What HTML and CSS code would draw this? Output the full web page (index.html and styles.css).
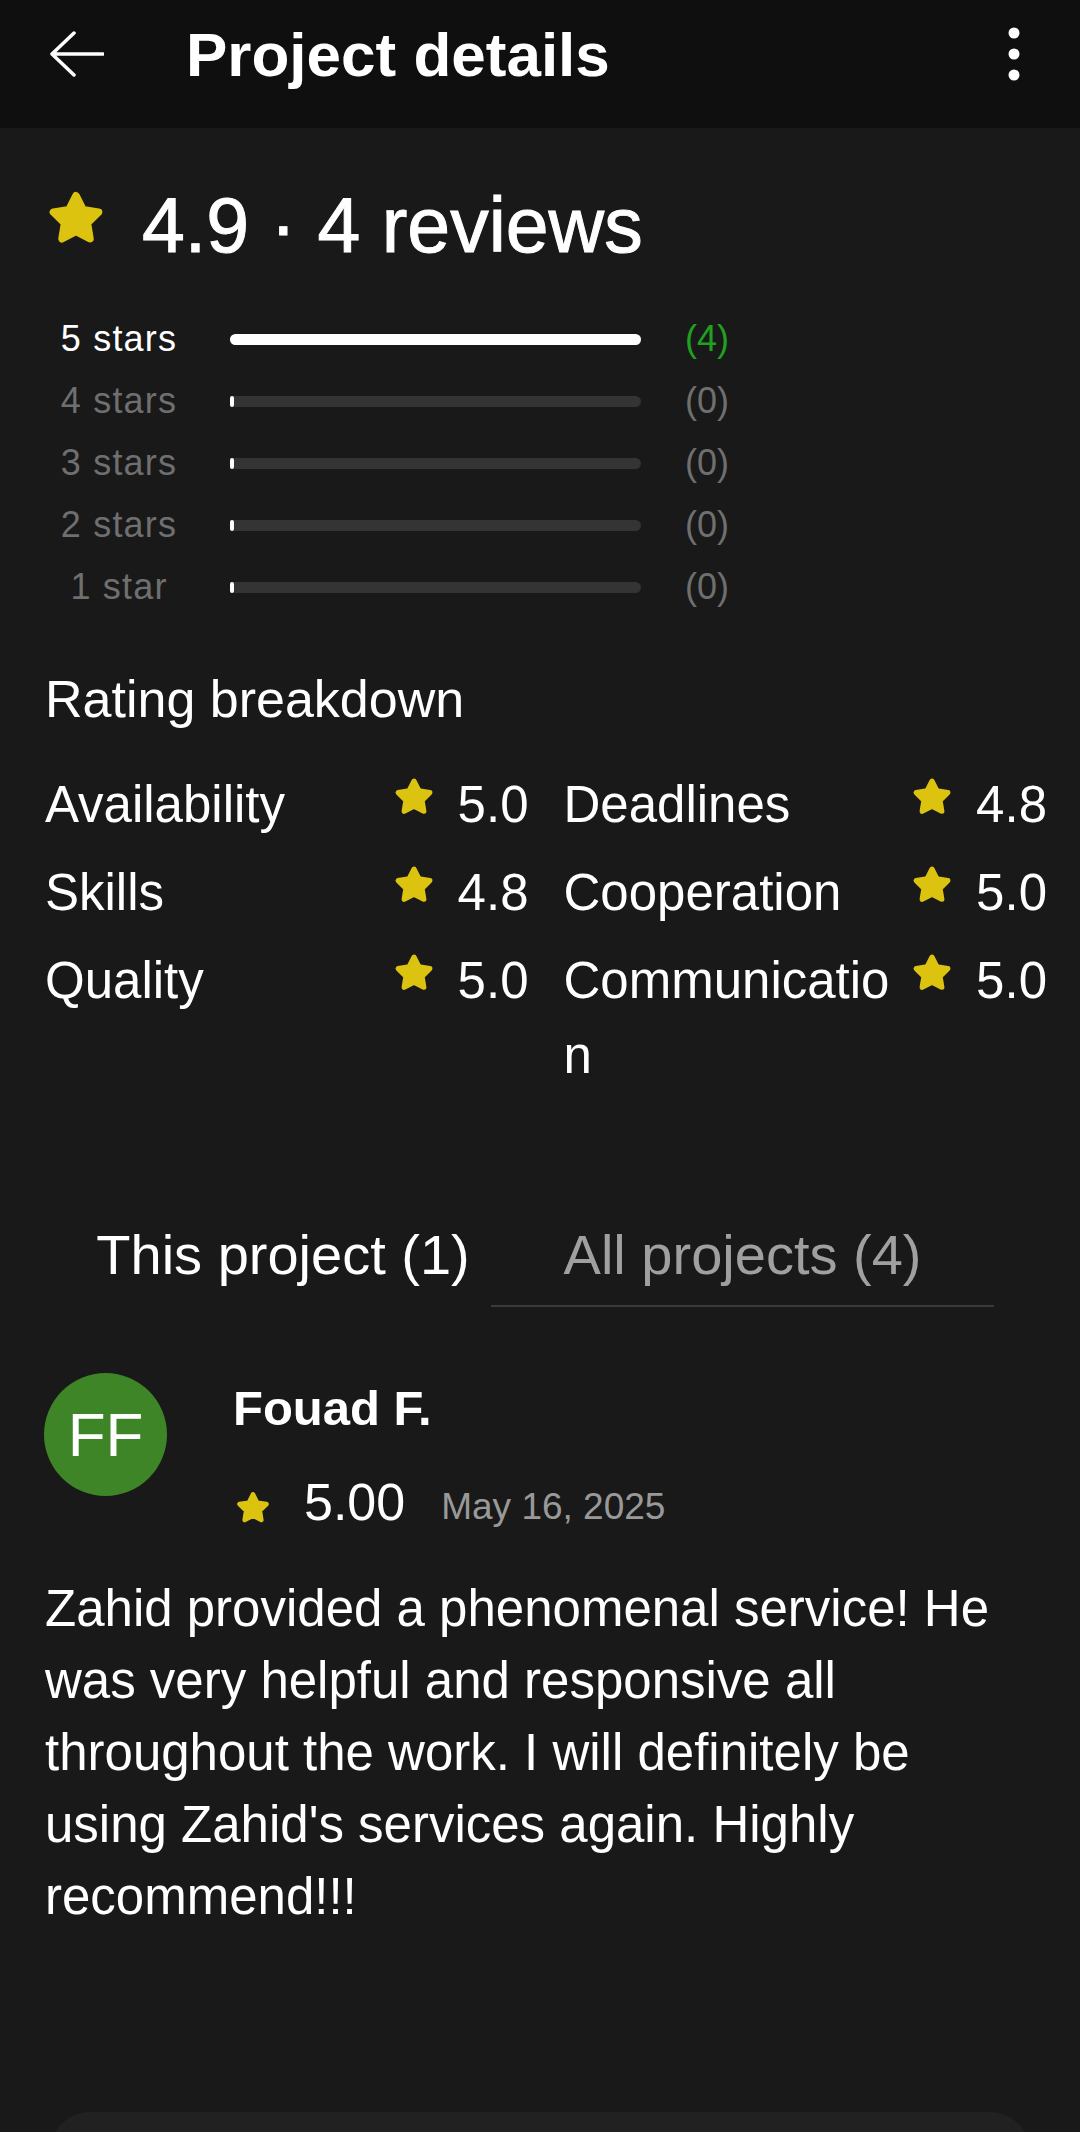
FILE: index.html
```html
<!DOCTYPE html>
<html>
<head>
    <link rel="stylesheet" href="styles.css">
</head>
<body>
    <div class="topbar">
        <svg class="back" width="55" height="46" viewBox="0 0 55 46">
            <path d="M54 23 H3 M25 2 L3 23 L25 44" fill="none" stroke="#fff" stroke-width="3.5" stroke-linecap="round" stroke-linejoin="round"/>
        </svg>
        <div class="title">Project details</div>
        <svg class="menu" width="12" height="54" viewBox="0 0 12 54">
            <circle cx="6" cy="6" r="5.5" fill="#fff"/>
            <circle cx="6" cy="27" r="5.5" fill="#fff"/>
            <circle cx="6" cy="48" r="5.5" fill="#fff"/>
        </svg>
    </div>

    <div class="main">
        <div class="summary">
            <svg class="star star-big" viewBox="0 0 24 24"><use href="#star"/></svg>
            <div class="summary-text">4.9 · 4 reviews</div>
        </div>

        <div class="dist">
            <div class="dist-row active">
                <div class="dist-label">5 stars</div>
                <div class="track"><div class="fill" style="width: 100%"></div></div>
                <div class="dist-count">(4)</div>
            </div>
            <div class="dist-row">
                <div class="dist-label">4 stars</div>
                <div class="track"><div class="fill" style="width: 0%"></div></div>
                <div class="dist-count">(0)</div>
            </div>
            <div class="dist-row">
                <div class="dist-label">3 stars</div>
                <div class="track"><div class="fill" style="width: 0%"></div></div>
                <div class="dist-count">(0)</div>
            </div>
            <div class="dist-row">
                <div class="dist-label">2 stars</div>
                <div class="track"><div class="fill" style="width: 0%"></div></div>
                <div class="dist-count">(0)</div>
            </div>
            <div class="dist-row">
                <div class="dist-label">1 star</div>
                <div class="track"><div class="fill" style="width: 0%"></div></div>
                <div class="dist-count">(0)</div>
            </div>
        </div>

        <div class="section-title">Rating breakdown</div>

        <div class="breakdown">
            <div class="metric">
                <div class="metric-label">Availability</div>
                <svg class="star star-small" viewBox="0 0 24 24"><use href="#star"/></svg>
                <div class="metric-value">5.0</div>
            </div>
            <div class="metric">
                <div class="metric-label">Deadlines</div>
                <svg class="star star-small" viewBox="0 0 24 24"><use href="#star"/></svg>
                <div class="metric-value">4.8</div>
            </div>
            <div class="metric">
                <div class="metric-label">Skills</div>
                <svg class="star star-small" viewBox="0 0 24 24"><use href="#star"/></svg>
                <div class="metric-value">4.8</div>
            </div>
            <div class="metric">
                <div class="metric-label">Cooperation</div>
                <svg class="star star-small" viewBox="0 0 24 24"><use href="#star"/></svg>
                <div class="metric-value">5.0</div>
            </div>
            <div class="metric">
                <div class="metric-label">Quality</div>
                <svg class="star star-small" viewBox="0 0 24 24"><use href="#star"/></svg>
                <div class="metric-value">5.0</div>
            </div>
            <div class="metric">
                <div class="metric-label">Communication</div>
                <svg class="star star-small" viewBox="0 0 24 24"><use href="#star"/></svg>
                <div class="metric-value">5.0</div>
            </div>
        </div>

        <div class="tabs">
            <div class="tab tab-current">This project (1)</div>
            <div class="tab tab-other">All projects (4)</div>
        </div>

        <div class="review">
            <div class="review-head">
                <div class="avatar">FF</div>
                <div class="review-meta">
                    <div class="reviewer">Fouad F.</div>
                    <div class="review-rating">
                        <svg class="star star-tiny" viewBox="0 0 24 24"><use href="#star"/></svg>
                        <span class="review-score">5.00</span>
                        <span class="review-date">May 16, 2025</span>
                    </div>
                </div>
            </div>
            <p class="review-text">Zahid provided a phenomenal service! He was very helpful and responsive all throughout the work. I will definitely be using Zahid's services again. Highly recommend!!!</p>
        </div>
    </div>

    <div class="sheet"></div>

    <svg width="0" height="0" class="defs">
        <defs>
            <polygon id="star" points="12,3.5 14.82,9.12 21.03,10.06 16.57,14.48 17.59,20.69 12,17.8 6.41,20.69 7.43,14.48 2.97,10.06 9.18,9.12" fill="#dcc30f" stroke="#dcc30f" stroke-width="3" stroke-linejoin="round"/>
        </defs>
    </svg>
</body>
</html>
```

FILE: styles.css
```css
body {
    margin: 0;
    height: 2132px;
    overflow: hidden;
    background: #191919;
    color: #fff;
    font-family: "Liberation Sans", Arial, sans-serif;
}

.defs {
    position: absolute;
}

.topbar {
    height: 128px;
    box-sizing: border-box;
    padding-bottom: 24px;
    background: #0f0f0f;
    display: flex;
    align-items: center;
}

.back {
    margin-left: 49px;
    margin-top: 4px;
}

.title {
    margin-left: 82px;
    padding-top: 5px;
    font-size: 62px;
    font-weight: bold;
    line-height: 1;
}

.menu {
    margin-left: auto;
    margin-right: 60px;
    margin-top: 4px;
}

.main {
    padding: 0 33px 0 45px;
}

/* overall score */
.summary {
    margin-top: 59px;
    height: 76px;
    display: flex;
}

.star-big {
    width: 60px;
    height: 60px;
    margin-left: 1px;
    margin-top: 0;
}

.summary-text {
    margin-left: 36px;
    font-size: 77px;
    line-height: 76px;
    -webkit-text-stroke: 1px #fff;
}

/* stars distribution */
.dist {
    margin-top: 45px;
}

.dist-row {
    height: 62px;
    display: flex;
    align-items: center;
    color: #6f6f6f;
}

.dist-row.active {
    color: #fff;
}

.dist-label {
    width: 150px;
    margin-left: -1px;
    text-align: center;
    font-size: 36px;
    letter-spacing: 1.2px;
}

.track {
    width: 411px;
    height: 11px;
    margin-left: 36px;
    border-radius: 6px;
    background: #343434;
}

.fill {
    min-width: 4px;
    height: 100%;
    border-radius: 6px;
    background: #fff;
}

.dist-count {
    margin-left: 44px;
    font-size: 36px;
}

.dist-row.active .dist-count {
    color: #20a020;
}

/* breakdown */
.section-title {
    margin-top: 44px;
    font-size: 52px;
    line-height: 75px;
}

.breakdown {
    margin-top: 30px;
    display: grid;
    grid-template-columns: 1fr 1fr;
    column-gap: 35px;
    row-gap: 13px;
}

.metric {
    display: flex;
    align-items: flex-start;
    font-size: 51px;
    line-height: 75px;
}

.metric-label {
    flex: 1;
    min-width: 0;
    margin-right: 14px;
    word-break: break-all;
}

.star-small {
    width: 42px;
    height: 42px;
    margin-top: 8px;
    flex-shrink: 0;
}

.metric-value {
    width: 73px;
    margin-left: 21px;
    text-align: right;
}

/* tabs */
.tabs {
    margin-top: 128px;
    display: flex;
}

.tab {
    font-size: 56px;
    line-height: 68px;
    padding-bottom: 16px;
    text-align: center;
    border-bottom: 2px solid transparent;
}

.tab-current {
    width: 416px;
    margin-left: 30px;
}

.tab-other {
    width: 503px;
    color: #a0a0a0;
    border-bottom-color: #3a3a3a;
}

/* review */
.review {
    margin-top: 66px;
}

.review-head {
    display: flex;
    align-items: flex-start;
}

.avatar {
    width: 123px;
    height: 123px;
    margin-left: -1px;
    border-radius: 50%;
    background: #3d8527;
    font-size: 62px;
    line-height: 123px;
    text-align: center;
}

.review-meta {
    margin-left: 66px;
}

.reviewer {
    margin-top: 5px;
    font-size: 49px;
    font-weight: bold;
    line-height: 60px;
}

.review-rating {
    margin-top: 34px;
    height: 60px;
    display: flex;
    align-items: center;
}

.star-tiny {
    width: 36px;
    height: 36px;
    margin-left: 2px;
    margin-top: 10px;
}

.review-score {
    margin-left: 33px;
    font-size: 52px;
    line-height: 60px;
}

.review-date {
    margin-left: 36px;
    margin-top: 10px;
    font-size: 37px;
    line-height: 60px;
    color: #999;
}

.review-text {
    margin: 41px 40px 0 0;
    font-size: 51px;
    line-height: 72px;
}

.sheet {
    width: 980px;
    height: 100px;
    margin: 179px 0 0 50px;
    border-radius: 40px 40px 0 0;
    background: #212121;
}
```
